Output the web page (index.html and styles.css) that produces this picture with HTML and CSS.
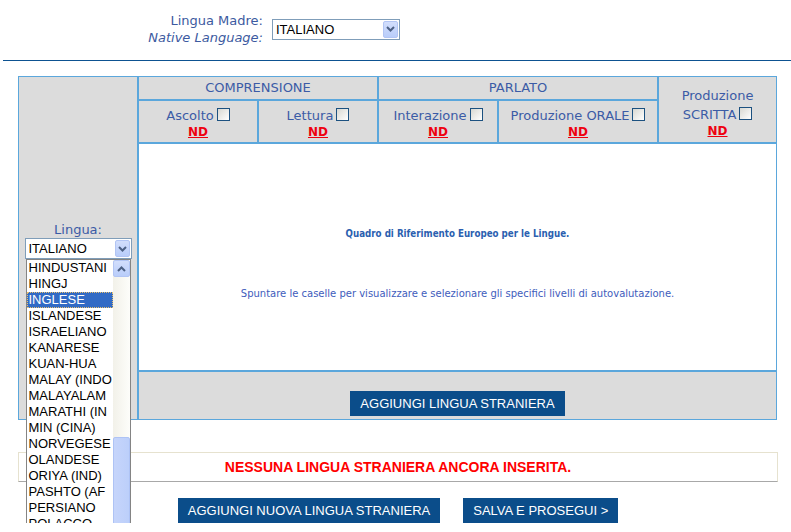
FILE: index.html
```html
<!DOCTYPE html>
<html>
<head>
<meta charset="utf-8">
<title>Lingue straniere</title>
<link rel="stylesheet" href="styles.css">
</head>
<body>
<div class="top">
  <div class="labels">
    <div class="lbl">Lingua Madre:</div>
    <div class="lbl it">Native Language:</div>
  </div>
  <div class="select sel-top">
    <span class="val">ITALIANO</span>
    <span class="arrow"><svg width="11" height="8" viewBox="0 0 11 8"><path d="M2 2 L5.5 5.5 L9 2" fill="none" stroke="#4d6185" stroke-width="2"/></svg></span>
  </div>
</div>
<div class="rule"></div>

<table class="grid">
  <colgroup>
    <col class="w120"><col class="w120"><col class="w120"><col class="w120"><col class="w160"><col class="w119">
  </colgroup>
  <tr class="r1">
    <td class="lang" rowspan="4">
      <div class="lang-lbl">Lingua:</div>
      <div class="selwrap">
        <div class="select sel-lang">
          <span class="val">ITALIANO</span>
          <span class="arrow"><svg width="11" height="8" viewBox="0 0 11 8"><path d="M2 2 L5.5 5.5 L9 2" fill="none" stroke="#4d6185" stroke-width="2"/></svg></span>
        </div>
        <div class="droplist">
          <ul class="items">
            <li>HINDUSTANI</li>
            <li>HINGJ</li>
            <li class="sel">INGLESE</li>
            <li>ISLANDESE</li>
            <li>ISRAELIANO</li>
            <li>KANARESE</li>
            <li>KUAN-HUA</li>
            <li>MALAY (INDO</li>
            <li>MALAYALAM</li>
            <li>MARATHI (IN</li>
            <li>MIN (CINA)</li>
            <li>NORVEGESE</li>
            <li>OLANDESE</li>
            <li>ORIYA (IND)</li>
            <li>PASHTO (AF</li>
            <li>PERSIANO</li>
            <li>POLACCO</li>
          </ul>
          <div class="sbar">
            <div class="sbtn"><svg width="11" height="8" viewBox="0 0 11 8"><path d="M2 6 L5.5 2.5 L9 6" fill="none" stroke="#4d6185" stroke-width="2"/></svg></div>
            <div class="thumb"></div>
          </div>
        </div>
      </div>
    </td>
    <th class="h1" colspan="2">COMPRENSIONE</th>
    <th class="h1" colspan="2">PARLATO</th>
    <th class="h2 scr" rowspan="2">
      <div class="ln">Produzione</div>
      <div class="ln ln2">SCRITTA<span class="cb"></span></div>
      <div class="ln"><a class="nd" href="#">ND</a></div>
    </th>
  </tr>
  <tr class="r2">
    <th class="h2"><div class="ln">Ascolto<span class="cb"></span></div><div class="ln"><a class="nd" href="#">ND</a></div></th>
    <th class="h2"><div class="ln">Lettura<span class="cb"></span></div><div class="ln"><a class="nd" href="#">ND</a></div></th>
    <th class="h2"><div class="ln">Interazione<span class="cb"></span></div><div class="ln"><a class="nd" href="#">ND</a></div></th>
    <th class="h2"><div class="ln">Produzione ORALE<span class="cb"></span></div><div class="ln"><a class="nd" href="#">ND</a></div></th>
  </tr>
  <tr class="r3">
    <td class="info" colspan="5">
      <div class="qtitle">Quadro di Riferimento Europeo per le Lingue.</div>
      <div class="qnote">Spuntare le caselle per visualizzare e selezionare gli specifici livelli di autovalutazione.</div>
    </td>
  </tr>
  <tr class="r4">
    <td class="act" colspan="5"><span class="btn">AGGIUNGI LINGUA STRANIERA</span></td>
  </tr>
</table>

<div class="msg">NESSUNA LINGUA STRANIERA ANCORA INSERITA.</div>

<div class="actions">
  <span class="btn">AGGIUNGI NUOVA LINGUA STRANIERA</span>
  <span class="btn">SALVA E PROSEGUI &gt;</span>
</div>
</body>
</html>
```
FILE: styles.css
```css
html { overflow: hidden; }
body {
  margin: 0;
  background: #ffffff;
  font-family: "DejaVu Sans", Verdana, sans-serif;
  font-size: 13px;
  color: #3b5ba6;
}

/* top */
.top {
  display: flex;
  align-items: center;
  padding-top: 12px;
}
.labels {
  width: 263px;
  text-align: right;
  margin-right: 9px;
}
.lbl {
  line-height: 17px;
  color: #3c5aa0;
}
.lbl.it { font-style: italic; }

.select {
  position: relative;
  box-sizing: border-box;
  height: 21px;
  border: 1px solid #7f9db9;
  background: #fff;
  font-family: "Liberation Sans", Arial, sans-serif;
  font-size: 13px;
  color: #000;
  line-height: 19px;
}
.select .val { padding-left: 3px; }
.select .arrow {
  position: absolute;
  right: 1px;
  top: 1px;
  width: 15px;
  height: 17px;
  box-sizing: border-box;
  border: 1px solid #b2c5f4;
  border-radius: 2px;
  background: linear-gradient(#d2defc, #b9cdfa);
  display: flex;
  align-items: center;
  justify-content: center;
}
.sel-top { width: 128px; }

.rule {
  margin: 14px 0 0 3px;
  height: 1px;
  background: #0d5291;
}

/* grid table */
.grid {
  margin: 15px 0 0 18px;
  border-collapse: separate;
  border-spacing: 0;
  table-layout: fixed;
  width: 759px;
  background: #dcdcdc;
}
.w120 { width: 120px; }
.w160 { width: 160px; }
.w119 { width: 119px; }
.grid td, .grid th {
  border: 1px solid #5ba7dc;
  padding: 0;
  font-weight: normal;
  text-align: center;
}
.r1 { height: 24px; }
.r2 { height: 43px; }
.r3 { height: 228px; }
.r4 { height: 49px; }

.h1 { vertical-align: middle; line-height: 16px; }
.h2 { vertical-align: top; padding-top: 7px !important; }
.h2.scr { padding-top: 11px !important; }
.ln { line-height: 16px; white-space: nowrap; }
.h2 .ln:last-child { margin-top: 0; }
.scr .ln2 { margin-top: 3px; }
.cb {
  display: inline-block;
  width: 13px;
  height: 13px;
  box-sizing: border-box;
  border: 1px solid #1c5180;
  background: linear-gradient(135deg, #d8d8d2, #ffffff);
  margin-left: 3px;
  vertical-align: -1px;
}
.nd {
  color: #ee0010;
  font-weight: bold;
  font-size: 12px;
  text-decoration: underline;
}

.lang {
  vertical-align: top;
  padding-top: 145px !important;
}
.lang-lbl { line-height: 16px; }
.selwrap {
  position: relative;
  width: 107px;
  margin: 0 auto;
  text-align: left;
}
.sel-lang { width: 107px; }

.droplist {
  position: absolute;
  left: 1px;
  top: 21px;
  width: 105px;
  height: 274px;
  box-sizing: border-box;
  border: 1px solid #848484;
  border-bottom: 0;
  background: #fff;
  display: flex;
  z-index: 5;
}
.items {
  list-style: none;
  margin: 0;
  padding: 0;
  flex: 1;
  overflow: hidden;
  font-family: "Liberation Sans", Arial, sans-serif;
  font-size: 13px;
  color: #000;
}
.items li {
  height: 16px;
  line-height: 15px;
  padding-left: 2px;
  white-space: nowrap;
  overflow: hidden;
}
.items li.sel {
  background: #316ac5;
  color: #fff;
  outline: 1px dotted #e8c070;
  outline-offset: -1px;
}
.sbar {
  width: 17px;
  background: linear-gradient(90deg, #f2f1e9, #fdfdfa);
  position: relative;
}
.sbtn {
  height: 17px;
  box-sizing: border-box;
  border: 1px solid #b2c5f4;
  border-radius: 2px;
  background: linear-gradient(#d2defc, #b9cdfa);
  display: flex;
  align-items: center;
  justify-content: center;
}
.thumb {
  position: absolute;
  left: 0;
  right: 0;
  top: 177px;
  bottom: -4px;
  box-sizing: border-box;
  border: 1px solid #aec3f5;
  border-radius: 2px;
  background: linear-gradient(90deg, #c6d5fb, #bccffa);
}

.info {
  background: #fff;
  vertical-align: top;
}
.qtitle {
  margin-top: 84px;
  font-family: "DejaVu Sans Condensed", "DejaVu Sans", sans-serif;
  font-stretch: condensed;
  font-weight: bold;
  font-size: 9.7px;
  line-height: 12px;
  color: #2b5fb0;
}
.qnote {
  margin-top: 48px;
  font-size: 10px;
  line-height: 12px;
  color: #3e5cbc;
}

.act {
  vertical-align: top;
  padding-top: 19px !important;
}

.btn {
  display: inline-block;
  height: 25px;
  line-height: 25px;
  padding: 0 10px;
  background: #0b4d8a;
  color: #fff;
  font-family: "Liberation Sans", Arial, sans-serif;
  font-size: 13px;
  vertical-align: top;
}

.msg {
  margin: 32px 0 0 18px;
  width: 760px;
  height: 30px;
  box-sizing: border-box;
  border: 1px solid #e6e2cf;
  border-bottom-color: #a8a8a8;
  text-align: center;
  line-height: 28px;
  font-family: "Liberation Sans", Arial, sans-serif;
  font-weight: bold;
  font-size: 14px;
  color: #ff0000;
}

.actions {
  margin: 16px 0 0 18px;
  width: 760px;
  display: flex;
  justify-content: center;
  gap: 23px;
}
```
